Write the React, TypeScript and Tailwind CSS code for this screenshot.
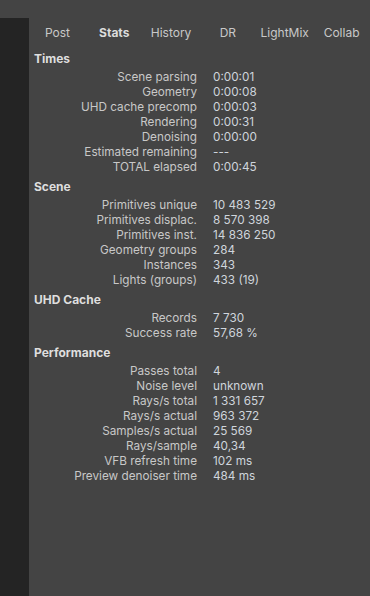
import React from "react";

type Row = [string, string];
const sections: { title: string; rows: Row[] }[] = [
  {
    title: "Times",
    rows: [
      ["Scene parsing", "0:00:01"],
      ["Geometry", "0:00:08"],
      ["UHD cache precomp", "0:00:03"],
      ["Rendering", "0:00:31"],
      ["Denoising", "0:00:00"],
      ["Estimated remaining", "---"],
      ["TOTAL elapsed", "0:00:45"],
    ],
  },
  {
    title: "Scene",
    rows: [
      ["Primitives unique", "10 483 529"],
      ["Primitives displac.", "8 570 398"],
      ["Primitives inst.", "14 836 250"],
      ["Geometry groups", "284"],
      ["Instances", "343"],
      ["Lights (groups)", "433 (19)"],
    ],
  },
  {
    title: "UHD Cache",
    rows: [
      ["Records", "7 730"],
      ["Success rate", "57,68 %"],
    ],
  },
  {
    title: "Performance",
    rows: [
      ["Passes total", "4"],
      ["Noise level", "unknown"],
      ["Rays/s total", "1 331 657"],
      ["Rays/s actual", "963 372"],
      ["Samples/s actual", "25 569"],
      ["Rays/sample", "40,34"],
      ["VFB refresh time", "102 ms"],
      ["Preview denoiser time", "484 ms"],
    ],
  },
];

const tabs = ["Post", "Stats", "History", "DR", "LightMix", "Collab"];

export default function App() {
  return (
    <div
      className="w-[370px] h-[596px] bg-[#444444] flex flex-col overflow-hidden text-[11.75px]"
      style={{ fontFamily: "Inter, 'Noto Sans', sans-serif" }}
    >
      <div className="h-[18px] shrink-0" />
      <div className="flex flex-1">
        <div className="w-[29px] bg-[#242424] shrink-0" />
        <div className="flex-1 flex flex-col">
          <div className="flex h-[29px] items-center text-[12px]">
            {tabs.map((t) => (
              <div
                key={t}
                className={
                  "flex-1 text-center " +
                  (t === "Stats"
                    ? "font-bold text-[#dcdcdc]"
                    : "text-[#c8c8c8]")
                }
              >
                {t}
              </div>
            ))}
          </div>
          {sections.map((s) => (
            <div key={s.title}>
              <div className="h-[23px] flex items-center pl-[5px] font-bold text-[12px] text-[#dedede]">
                {s.title}
              </div>
              {s.rows.map(([l, v]) => (
                <div key={l} className="grid grid-cols-[168px_1fr] h-[15px] items-center leading-[15px]">
                  <div className="text-right text-[#c8c8c8]">{l}</div>
                  <div className="pl-[16px] text-[#cfd5dc]">{v}</div>
                </div>
              ))}
            </div>
          ))}
        </div>
      </div>
    </div>
  );
}
